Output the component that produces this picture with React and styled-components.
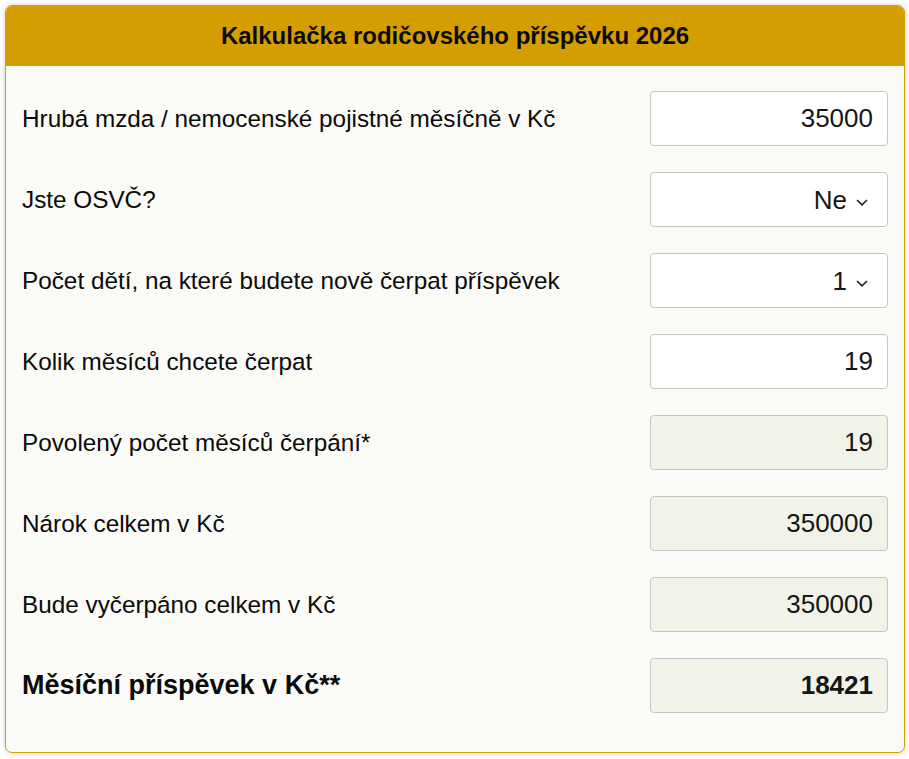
import React, { useState } from 'react';
import styled, { createGlobalStyle } from 'styled-components';

const Global = createGlobalStyle`
  html, body {
    margin: 0;
    padding: 0;
    background: #ffffff;
  }
  body {
    font-family: "Liberation Sans", Arial, sans-serif;
  }
`;

const Page = styled.div`
  padding: 5px 4px 6px 5px;
`;

const Card = styled.div`
  width: 900px;
  box-sizing: border-box;
  border: 1px solid #d49e00;
  border-radius: 7px;
  background: #fafaf6;
  box-shadow: 0 0 6px rgba(0, 0, 0, 0.18);
  overflow: hidden;
`;

const Header = styled.div`
  height: 60px;
  background: #d49e00;
  display: flex;
  align-items: center;
  justify-content: center;
  font-weight: bold;
  font-size: 24px;
  color: #0a0a0a;
`;

const Body = styled.div`
  padding: 25px 16px 39px 16px;
  display: flex;
  flex-direction: column;
  gap: 26px;
`;

const Row = styled.div`
  display: flex;
  align-items: center;
  justify-content: space-between;
  height: 55px;
`;

const Label = styled.label`
  font-size: ${p => (p.$strong ? '27px' : '24.3px')};
  font-weight: ${p => (p.$strong ? 'bold' : 'normal')};
  color: #0a0a0a;
`;

const Field = styled.input`
  width: 238px;
  height: 55px;
  box-sizing: border-box;
  border: 1px solid #c4c4c4;
  border-radius: 4px;
  background: ${p => (p.readOnly ? '#f2f3e8' : '#ffffff')};
  padding: 0 14px;
  text-align: right;
  font-family: "Liberation Sans", Arial, sans-serif;
  font-size: 26px;
  font-weight: ${p => (p.$strong ? 'bold' : 'normal')};
  color: #161616;
  outline: none;
`;

const SelectWrap = styled.div`
  position: relative;
  width: 238px;
  height: 55px;
`;

const Select = styled.select`
  appearance: none;
  width: 100%;
  height: 100%;
  box-sizing: border-box;
  border: 1px solid #c4c4c4;
  border-radius: 4px;
  background: #ffffff;
  padding: 0 40px 0 14px;
  text-align: right;
  text-align-last: right;
  font-family: "Liberation Sans", Arial, sans-serif;
  font-size: 26px;
  color: #161616;
  outline: none;
`;

const Chevron = styled.svg`
  position: absolute;
  right: 20px;
  top: 27px;
  pointer-events: none;
`;

function Dropdown({ value, onChange, options }) {
  return (
    <SelectWrap>
      <Select value={value} onChange={e => onChange(e.target.value)}>
        {options.map(o => (
          <option key={o} value={o}>{o}</option>
        ))}
      </Select>
      <Chevron width="12" height="7" viewBox="0 0 12 7">
        <path d="M1 1 L6 5.8 L11 1" fill="none" stroke="#222" strokeWidth="1.6" />
      </Chevron>
    </SelectWrap>
  );
}

export default function App() {
  const [salary, setSalary] = useState('35000');
  const [osvc, setOsvc] = useState('Ne');
  const [kids, setKids] = useState('1');
  const [months, setMonths] = useState('19');

  const total = 350000;
  const allowed = 19;
  const monthly = Math.round(total / (Number(months) || 1));

  return (
    <Page>
      <Global />
      <Card>
        <Header>Kalkulačka rodičovského příspěvku 2026</Header>
        <Body>
          <Row>
            <Label>Hrubá mzda / nemocenské pojistné měsíčně v Kč</Label>
            <Field value={salary} onChange={e => setSalary(e.target.value)} />
          </Row>
          <Row>
            <Label>Jste OSVČ?</Label>
            <Dropdown value={osvc} onChange={setOsvc} options={['Ne', 'Ano']} />
          </Row>
          <Row>
            <Label>Počet dětí, na které budete nově čerpat příspěvek</Label>
            <Dropdown value={kids} onChange={setKids} options={['1', '2', '3']} />
          </Row>
          <Row>
            <Label>Kolik měsíců chcete čerpat</Label>
            <Field value={months} onChange={e => setMonths(e.target.value)} />
          </Row>
          <Row>
            <Label>Povolený počet měsíců čerpání*</Label>
            <Field readOnly value={allowed} />
          </Row>
          <Row>
            <Label>Nárok celkem v Kč</Label>
            <Field readOnly value={total} />
          </Row>
          <Row>
            <Label>Bude vyčerpáno celkem v Kč</Label>
            <Field readOnly value={total} />
          </Row>
          <Row>
            <Label $strong>Měsíční příspěvek v Kč**</Label>
            <Field readOnly $strong value={monthly} />
          </Row>
        </Body>
      </Card>
    </Page>
  );
}
